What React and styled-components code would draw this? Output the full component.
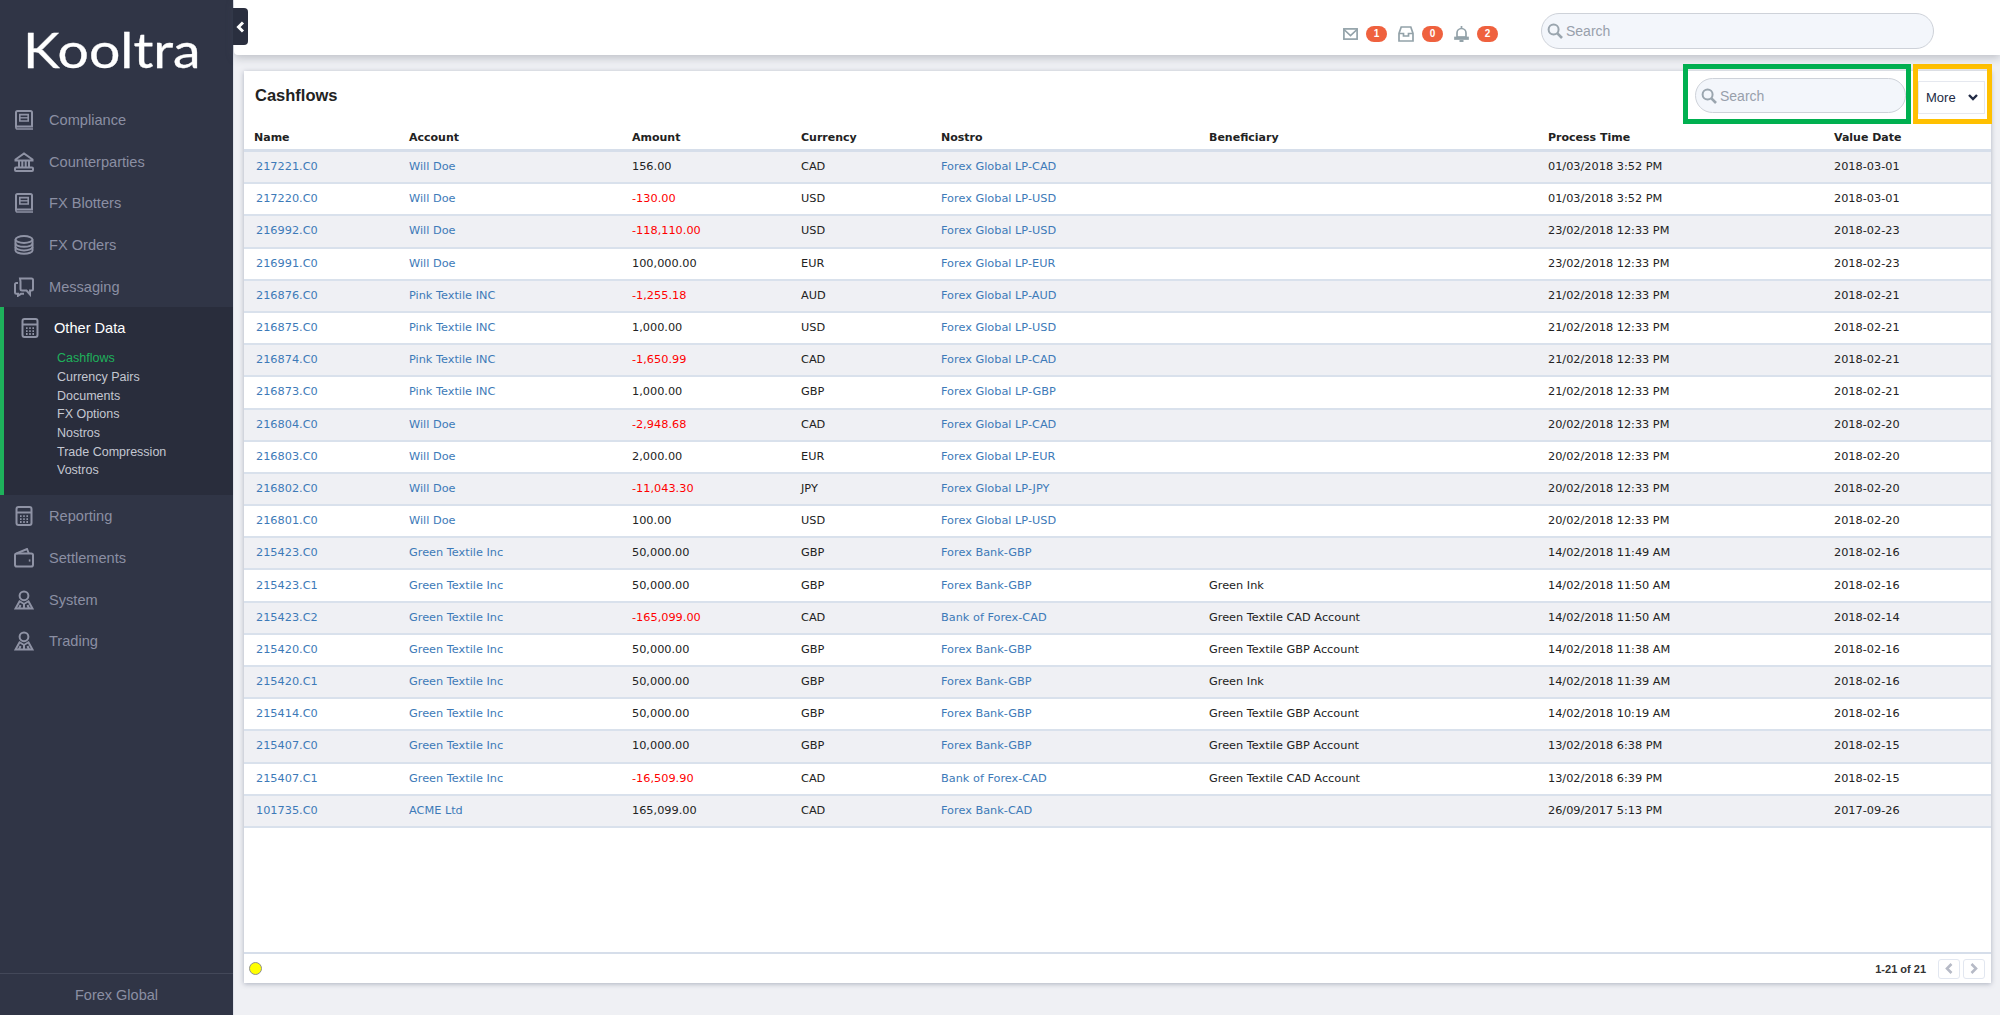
import React from "react";
import styled, { createGlobalStyle } from "styled-components";

const GlobalStyle = createGlobalStyle`
  html, body {
    margin: 0;
    padding: 0;
    height: 100%;
    background: #eff0f4;
    overflow: hidden;
  }
  * { box-sizing: border-box; }
`;

const rows = [
  ["217221.C0", "Will Doe", "156.00", "CAD", "Forex Global LP-CAD", "", "01/03/2018 3:52 PM", "2018-03-01"],
  ["217220.C0", "Will Doe", "-130.00", "USD", "Forex Global LP-USD", "", "01/03/2018 3:52 PM", "2018-03-01"],
  ["216992.C0", "Will Doe", "-118,110.00", "USD", "Forex Global LP-USD", "", "23/02/2018 12:33 PM", "2018-02-23"],
  ["216991.C0", "Will Doe", "100,000.00", "EUR", "Forex Global LP-EUR", "", "23/02/2018 12:33 PM", "2018-02-23"],
  ["216876.C0", "Pink Textile INC", "-1,255.18", "AUD", "Forex Global LP-AUD", "", "21/02/2018 12:33 PM", "2018-02-21"],
  ["216875.C0", "Pink Textile INC", "1,000.00", "USD", "Forex Global LP-USD", "", "21/02/2018 12:33 PM", "2018-02-21"],
  ["216874.C0", "Pink Textile INC", "-1,650.99", "CAD", "Forex Global LP-CAD", "", "21/02/2018 12:33 PM", "2018-02-21"],
  ["216873.C0", "Pink Textile INC", "1,000.00", "GBP", "Forex Global LP-GBP", "", "21/02/2018 12:33 PM", "2018-02-21"],
  ["216804.C0", "Will Doe", "-2,948.68", "CAD", "Forex Global LP-CAD", "", "20/02/2018 12:33 PM", "2018-02-20"],
  ["216803.C0", "Will Doe", "2,000.00", "EUR", "Forex Global LP-EUR", "", "20/02/2018 12:33 PM", "2018-02-20"],
  ["216802.C0", "Will Doe", "-11,043.30", "JPY", "Forex Global LP-JPY", "", "20/02/2018 12:33 PM", "2018-02-20"],
  ["216801.C0", "Will Doe", "100.00", "USD", "Forex Global LP-USD", "", "20/02/2018 12:33 PM", "2018-02-20"],
  ["215423.C0", "Green Textile Inc", "50,000.00", "GBP", "Forex Bank-GBP", "", "14/02/2018 11:49 AM", "2018-02-16"],
  ["215423.C1", "Green Textile Inc", "50,000.00", "GBP", "Forex Bank-GBP", "Green Ink", "14/02/2018 11:50 AM", "2018-02-16"],
  ["215423.C2", "Green Textile Inc", "-165,099.00", "CAD", "Bank of Forex-CAD", "Green Textile CAD Account", "14/02/2018 11:50 AM", "2018-02-14"],
  ["215420.C0", "Green Textile Inc", "50,000.00", "GBP", "Forex Bank-GBP", "Green Textile GBP Account", "14/02/2018 11:38 AM", "2018-02-16"],
  ["215420.C1", "Green Textile Inc", "50,000.00", "GBP", "Forex Bank-GBP", "Green Ink", "14/02/2018 11:39 AM", "2018-02-16"],
  ["215414.C0", "Green Textile Inc", "50,000.00", "GBP", "Forex Bank-GBP", "Green Textile GBP Account", "14/02/2018 10:19 AM", "2018-02-16"],
  ["215407.C0", "Green Textile Inc", "10,000.00", "GBP", "Forex Bank-GBP", "Green Textile GBP Account", "13/02/2018 6:38 PM", "2018-02-15"],
  ["215407.C1", "Green Textile Inc", "-16,509.90", "CAD", "Bank of Forex-CAD", "Green Textile CAD Account", "13/02/2018 6:39 PM", "2018-02-15"],
  ["101735.C0", "ACME Ltd", "165,099.00", "CAD", "Forex Bank-CAD", "", "26/09/2017 5:13 PM", "2017-09-26"],
];

const headers = ["Name", "Account", "Amount", "Currency", "Nostro", "Beneficiary", "Process Time", "Value Date"];

const BookIcon = () => (
  <NavSvg viewBox="0 0 20 20">
    <path d="M2 16.5V2.5A1.5 1.5 0 0 1 3.5 1h13A1.5 1.5 0 0 1 18 2.5v14z" />
    <path d="M5.8 4.6h8.4v6.4H5.8z" strokeWidth="1.6" />
    <path d="M6 7.8h8" strokeWidth="1.4" />
    <path d="M2 16.5v1.2A1.3 1.3 0 0 0 3.3 19H19" strokeWidth="1.6" />
  </NavSvg>
);
const BankIcon = () => (
  <NavSvg viewBox="0 0 20 20">
    <path d="M1.5 7.5L10 1.5l8.5 6v1h-17z" />
    <path d="M5 9v6M8.3 9v6M11.7 9v6M15 9v6" />
    <rect x="1" y="15.5" width="18" height="3.5" rx="1" />
  </NavSvg>
);
const StackIcon = () => (
  <NavSvg viewBox="0 0 20 20">
    <ellipse cx="10" cy="4.5" rx="8.5" ry="3.4" />
    <path d="M1.5 4.5v4c0 1.8 3.8 3.3 8.5 3.3s8.5-1.5 8.5-3.3v-4" />
    <path d="M1.5 8.5v3.6c0 1.8 3.8 3.3 8.5 3.3s8.5-1.5 8.5-3.3V8.5" />
    <path d="M1.5 12v3.4c0 1.8 3.8 3.3 8.5 3.3s8.5-1.5 8.5-3.3V12" />
  </NavSvg>
);
const ChatIcon = () => (
  <NavSvg viewBox="0 0 20 20">
    <path d="M6 1.5h11.5A1.5 1.5 0 0 1 19 3v9a1.5 1.5 0 0 1-1.5 1.5H16v4l-3.5-4H8A1.5 1.5 0 0 1 6.5 12V4.5z" />
    <path d="M4 6H2.3A1.3 1.3 0 0 0 1 7.3v8.2a1.3 1.3 0 0 0 1.3 1.3H4v2l3-2h3" />
  </NavSvg>
);
const CalcIcon = () => (
  <NavSvg viewBox="0 0 20 20">
    <rect x="2.5" y="1" width="15" height="18" rx="2" />
    <path d="M2.5 6.5h15" />
    <path d="M6 10.2h1.6M9.2 10.2h1.6M12.4 10.2h1.6M6 13.2h1.6M9.2 13.2h1.6M12.4 13.2h1.6M6 16h1.6M9.2 16h1.6M12.4 16h1.6" strokeWidth="1.8" />
  </NavSvg>
);
const WalletIcon = () => (
  <NavSvg viewBox="0 0 20 20">
    <rect x="1" y="5.5" width="18" height="13" rx="1.8" />
    <path d="M2.5 5.5L13 1l1.8 4.5" />
    <path d="M14.8 12.5h1.6" strokeWidth="2.2" />
  </NavSvg>
);
const PersonIcon = () => (
  <NavSvg viewBox="0 0 20 20">
    <circle cx="10" cy="5.8" r="4.4" />
    <path d="M6 10.5L1.5 18.5h17L14 10.5" />
    <path d="M10 13.5v5M6.5 15l-1.5 3.5M13.5 15l1.5 3.5" />
    <path d="M6 11.5l4 2.5 4-2.5" strokeWidth="1.8" />
  </NavSvg>
);

const navTop = [
  ["Compliance", BookIcon],
  ["Counterparties", BankIcon],
  ["FX Blotters", BookIcon],
  ["FX Orders", StackIcon],
  ["Messaging", ChatIcon],
];
const subItems = ["Cashflows", "Currency Pairs", "Documents", "FX Options", "Nostros", "Trade Compression", "Vostros"];
const navBottom = [
  ["Reporting", CalcIcon],
  ["Settlements", WalletIcon],
  ["System", PersonIcon],
  ["Trading", PersonIcon],
];

const SearchGlyph = ({ size }) => (
  <svg width={size} height={size} viewBox="0 0 16 16" fill="none" stroke="#9aa5ae" strokeWidth="2">
    <circle cx="6.6" cy="6.6" r="5" />
    <path d="M10.4 10.4L15 15" strokeWidth="2.6" />
  </svg>
);

const App = () => {
  return (
    <Page>
      <GlobalStyle />
      <Sidebar>
        <Logo><LogoText>Kooltra</LogoText></Logo>
        <Nav>
          {navTop.map(([label, Icon]) => (
            <NavItem key={label}>
              <Icon />
              <span>{label}</span>
            </NavItem>
          ))}
          <ActiveSection>
            <ActiveItem>
              <CalcIcon />
              <ActiveLabel>Other Data</ActiveLabel>
            </ActiveItem>
            {subItems.map((label, i) => (
              <SubItem key={label} $active={i === 0}>{label}</SubItem>
            ))}
          </ActiveSection>
          {navBottom.map(([label, Icon]) => (
            <NavItem key={label}>
              <Icon />
              <span>{label}</span>
            </NavItem>
          ))}
        </Nav>
        <SideFooter>Forex Global</SideFooter>
      </Sidebar>

      <Main>
        <CollapseTab>
          <svg width="9" height="12" viewBox="0 0 9 12" fill="none" stroke="#fff" strokeWidth="3">
            <path d="M7 1.5L2.5 6 7 10.5" />
          </svg>
        </CollapseTab>
        <TopBar>
          <Notices>
            <Notice>
              <svg width="15" height="12" viewBox="0 0 15 12" fill="none" stroke="#93a2a9" strokeWidth="1.7">
                <rect x=".9" y=".9" width="13.2" height="10.2" />
                <path d="M1 1.5L7.5 7.5 14 1.5" />
              </svg>
              <Badge>1</Badge>
            </Notice>
            <Notice>
              <svg width="16" height="16" viewBox="0 0 16 16" fill="none" stroke="#93a2a9" strokeWidth="1.7">
                <path d="M3.2 1h9.6l2.2 6.5V15H1V7.5z" />
                <path d="M1 7.5h4.5v2.5h5V7.5H15" />
              </svg>
              <Badge>0</Badge>
            </Notice>
            <Notice>
              <svg width="15" height="16" viewBox="0 0 15 16" fill="none" stroke="#93a2a9" strokeWidth="1.7">
                <path d="M7.5 0v2M3 11V7a4.5 4.5 0 0 1 9 0v4z" />
                <path d="M1 11.5h13v1.5H1z" />
                <path d="M5.5 15h4" strokeWidth="2" />
              </svg>
              <Badge>2</Badge>
            </Notice>
          </Notices>
          <SearchBox $wide>
            <SearchGlyph size={16} />
            <SearchText>Search</SearchText>
          </SearchBox>
        </TopBar>

        <Content>
          <Card>
            <CardHead>
              <Title>Cashflows</Title>
              <CardTools>
                <SearchBox>
                  <SearchGlyph size={16} />
                  <SearchText>Search</SearchText>
                </SearchBox>
                <MoreButton>
                  More
                  <svg width="10" height="7" viewBox="0 0 10 7" fill="none" stroke="#222b45" strokeWidth="2.4">
                    <path d="M1 1l4 4 4-4" />
                  </svg>
                </MoreButton>
              </CardTools>
              <GreenMark />
              <YellowMark />
            </CardHead>

            <HeadRow>
              {headers.map((h, i) => (
                <HeadCell key={h} $first={i === 0}>{h}</HeadCell>
              ))}
            </HeadRow>

            <Rows>
              {rows.map((r, idx) => (
                <Row key={r[0]} $odd={idx % 2 === 0}>
                  <NameCell>{r[0]}</NameCell>
                  <LinkCell>{r[1]}</LinkCell>
                  <Cell $negative={r[2].startsWith("-")}>{r[2]}</Cell>
                  <Cell>{r[3]}</Cell>
                  <LinkCell>{r[4]}</LinkCell>
                  <Cell>{r[5]}</Cell>
                  <Cell>{r[6]}</Cell>
                  <Cell>{r[7]}</Cell>
                </Row>
              ))}
            </Rows>

            <CardFoot>
              <StatusDot />
              <Pager>
                <PagerText>1-21 of 21</PagerText>
                <PagerButton>
                  <svg width="8" height="11" viewBox="0 0 8 11" fill="none" stroke="#b6bac6" strokeWidth="2.6">
                    <path d="M6.5 1L2 5.5l4.5 4.5" />
                  </svg>
                </PagerButton>
                <PagerButton>
                  <svg width="8" height="11" viewBox="0 0 8 11" fill="none" stroke="#b6bac6" strokeWidth="2.6">
                    <path d="M1.5 1L6 5.5 1.5 10" />
                  </svg>
                </PagerButton>
              </Pager>
            </CardFoot>
          </Card>
        </Content>
      </Main>
    </Page>
  );
};

export default App;

const columns = "154px 223px 169px 140px 268px 339px 286px 1fr";

const Page = styled.div`
  display: flex;
  width: 2000px;
  height: 1015px;
  font-family: "DejaVu Sans", Verdana, sans-serif;
`;

const Sidebar = styled.aside`
  width: 233px;
  flex: none;
  display: flex;
  flex-direction: column;
  background: #303546;
`;

const Logo = styled.div`
  height: 99px;
  padding: 16px 0 0 23px;
  font-family: Lato, "Open Sans", sans-serif;
  font-size: 49px;
  line-height: 66px;
  color: #fff;
`;

const LogoText = styled.span`
  display: inline-block;
  transform: scaleX(1.13);
  transform-origin: left center;
  -webkit-text-stroke: 0.3px #fff;
`;

const Nav = styled.nav`
  flex: 1;
  display: flex;
  flex-direction: column;
`;

const NavSvg = styled.svg`
  width: 20px;
  height: 20px;
  flex: none;
  fill: none;
  stroke: #8f93a5;
  stroke-width: 2;
`;

const NavItem = styled.div`
  height: 41.7px;
  display: flex;
  align-items: center;
  gap: 15px;
  padding-left: 14px;
  font-family: "Liberation Sans", Arial, sans-serif;
  font-size: 14.6px;
  color: #8b8fa3;
`;

const ActiveSection = styled.div`
  height: 188px;
  background: #292d3c;
  border-left: 4px solid #1eb15b;
`;

const ActiveItem = styled(NavItem)`
  gap: 14px;
  padding-left: 16px;
`;

const ActiveLabel = styled.span`
  color: #fff;
`;

const SubItem = styled.div`
  height: 18.7px;
  padding-left: 53px;
  font-family: "Liberation Sans", Arial, sans-serif;
  font-size: 12.5px;
  line-height: 18.7px;
  color: ${(props) => (props.$active ? "#1eb15b" : "#c4c7d1")};
`;

const SideFooter = styled.div`
  height: 42px;
  border-top: 1px solid #434859;
  display: flex;
  align-items: center;
  justify-content: center;
  font-family: "Liberation Sans", Arial, sans-serif;
  font-size: 14.5px;
  color: #8b8fa3;
`;

const Main = styled.main`
  position: relative;
  flex: 1;
  min-width: 0;
  display: flex;
  flex-direction: column;
  border-left: 1px solid #dfe2ea;
`;

const CollapseTab = styled.div`
  position: absolute;
  left: -1px;
  top: 8px;
  width: 15px;
  height: 37px;
  display: flex;
  align-items: center;
  justify-content: center;
  background: #2a2f3f;
  border-radius: 0 4px 4px 0;
  z-index: 2;
`;

const TopBar = styled.header`
  height: 55px;
  flex: none;
  display: flex;
  align-items: center;
  justify-content: flex-end;
  gap: 43px;
  padding: 7px 66px 0 0;
  background: #fff;
  border-bottom-left-radius: 4px;
  box-shadow: 0 3px 8px rgba(80, 85, 100, 0.3);
  position: relative;
  z-index: 1;
`;

const Notices = styled.div`
  display: flex;
  align-items: center;
  gap: 11px;
  padding-top: 6px;
`;

const Notice = styled.div`
  display: flex;
  align-items: center;
  gap: 8px;
`;

const Badge = styled.span`
  width: 21px;
  height: 16px;
  border-radius: 8px;
  background: #ef613e;
  color: #fff;
  font-family: "Liberation Sans", Arial, sans-serif;
  font-size: 10px;
  font-weight: 700;
  line-height: 16px;
  text-align: center;
`;

const SearchBox = styled.div`
  width: ${(props) => (props.$wide ? "393px" : "211px")};
  height: ${(props) => (props.$wide ? "36px" : "35px")};
  display: flex;
  align-items: center;
  gap: 3px;
  padding-left: 5px;
  background: #f3f6fb;
  border: 1px solid #ced2d9;
  border-radius: 18px;
`;

const SearchText = styled.span`
  font-family: "Liberation Sans", Arial, sans-serif;
  font-size: 14px;
  color: #98a0ab;
`;

const Content = styled.div`
  flex: 1;
  min-height: 0;
  padding: 16px 9px 32px 10px;
`;

const Card = styled.section`
  height: 100%;
  display: flex;
  flex-direction: column;
  background: #fff;
  box-shadow: 0 1px 5px rgba(90, 100, 125, 0.45);
`;

const CardHead = styled.div`
  position: relative;
  height: 54px;
  flex: none;
  display: flex;
  align-items: flex-start;
  justify-content: space-between;
  padding: 7px 6px 0 11px;
`;

const Title = styled.h1`
  margin: 0;
  padding-top: 8px;
  font-family: "Liberation Sans", Arial, sans-serif;
  font-size: 16.5px;
  font-weight: 700;
  color: #222;
`;

const CardTools = styled.div`
  display: flex;
  gap: 12px;
`;

const MoreButton = styled.div`
  width: 67px;
  height: 33px;
  margin-top: 3px;
  display: flex;
  align-items: center;
  justify-content: space-between;
  padding: 0 6px 0 7px;
  background: #fff;
  border: 1px solid #e5e8ef;
  font-family: "Liberation Sans", Arial, sans-serif;
  font-size: 13px;
  color: #222b45;
`;

const GreenMark = styled.div`
  position: absolute;
  left: 1439px;
  top: -7px;
  width: 228px;
  height: 60px;
  border: 5px solid #00b050;
  pointer-events: none;
`;

const YellowMark = styled.div`
  position: absolute;
  left: 1669px;
  top: -7px;
  width: 79px;
  height: 60px;
  border: 5px solid #ffc000;
  pointer-events: none;
`;

const HeadRow = styled.div`
  height: 27px;
  flex: none;
  display: grid;
  grid-template-columns: ${columns};
  align-items: center;
  border-bottom: 3px solid #d6deea;
`;

const HeadCell = styled.div`
  padding-left: ${(props) => (props.$first ? "10px" : "11px")};
  font-size: 11px;
  font-weight: 700;
  color: #222;
`;

const Rows = styled.div`
  flex: 1;
  min-height: 0;
`;

const Row = styled.div`
  height: 32.2px;
  display: grid;
  grid-template-columns: ${columns};
  align-items: center;
  padding-bottom: 1px;
  background: ${(props) => (props.$odd ? "#eff0f4" : "#fff")};
  border-bottom: 2px solid #d9e1ec;
`;

const Cell = styled.div`
  padding-left: 11px;
  font-size: 11.3px;
  white-space: nowrap;
  color: ${(props) => (props.$negative ? "#ff0000" : "#222")};
`;

const LinkCell = styled(Cell)`
  color: #3d7ab8;
`;

const NameCell = styled(LinkCell)`
  padding-left: 12px;
`;

const CardFoot = styled.div`
  height: 31px;
  flex: none;
  display: flex;
  align-items: center;
  justify-content: space-between;
  padding: 0 6px 0 5px;
  border-top: 2px solid #d6deea;
`;

const StatusDot = styled.span`
  width: 13px;
  height: 13px;
  border-radius: 50%;
  background: #ffff00;
  border: 1px solid #8f8f8f;
`;

const Pager = styled.div`
  display: flex;
  align-items: center;
  gap: 3px;
`;

const PagerText = styled.span`
  margin-right: 9px;
  font-family: "Liberation Sans", Arial, sans-serif;
  font-size: 11px;
  font-weight: 700;
  color: #333;
`;

const PagerButton = styled.div`
  width: 22px;
  height: 20px;
  display: flex;
  align-items: center;
  justify-content: center;
  border: 1px solid #e2e7f0;
  border-radius: 3px;
`;
